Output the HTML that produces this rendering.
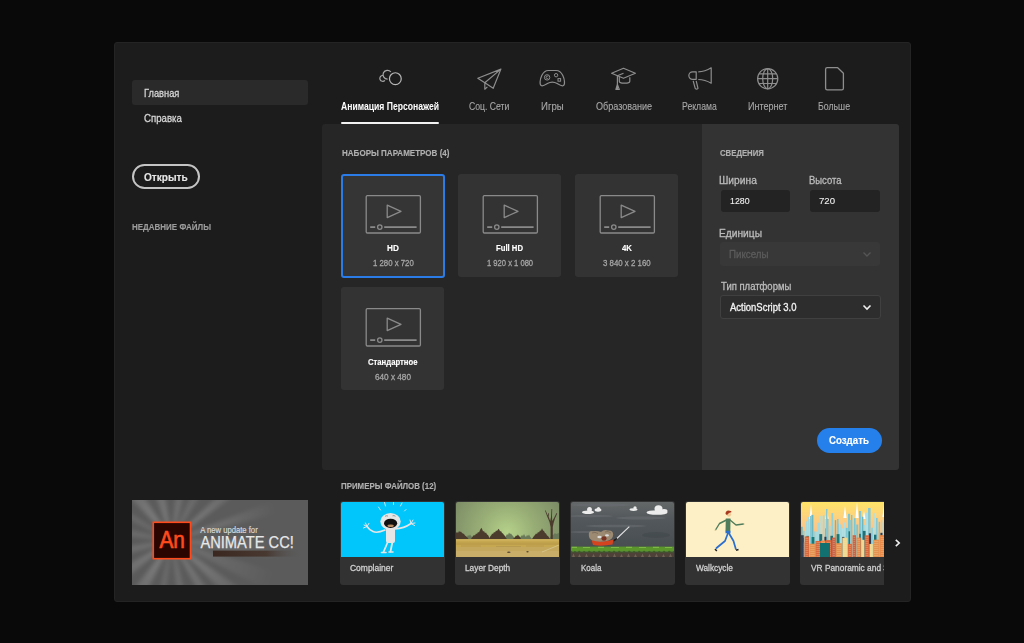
<!DOCTYPE html>
<html><head><meta charset="utf-8">
<style>
*{margin:0;padding:0;box-sizing:border-box}
html,body{width:1024px;height:643px;overflow:hidden;background:#090909;font-family:"Liberation Sans",sans-serif}
.a{position:absolute}
.t{position:absolute;white-space:nowrap;transform-origin:0 0;font-family:"Liberation Sans",sans-serif}
#panel{left:114px;top:42px;width:797px;height:560px;background:#1c1c1c;border:1px solid #242424;border-radius:3px}
</style></head><body>
<div id="panel" class="a"></div>
<!-- sidebar -->
<div class="a" style="left:132px;top:80px;width:176px;height:25px;background:#2a2a2a;border-radius:3px"></div>
<div class="a" style="left:132px;top:164px;width:68px;height:25px;border:2px solid #c4c4c4;border-radius:13px"></div>
<!-- banner -->
<div class="a" id="banner" style="left:132px;top:500px;width:176px;height:85px;background:#5a5a5a;overflow:hidden">
<svg class="a" style="left:0;top:0" width="176" height="85" viewBox="0 0 176 85">
<defs>
<radialGradient id="fade" cx="39.7" cy="40.6" r="110" gradientUnits="userSpaceOnUse"><stop offset="0" stop-color="#fff" stop-opacity="1"/><stop offset="0.5" stop-color="#fff" stop-opacity="0.5"/><stop offset="1" stop-color="#fff" stop-opacity="0"/></radialGradient>
<mask id="m1"><rect width="176" height="85" fill="url(#fade)"/></mask>
<filter id="bb" x="-20%" y="-20%" width="140%" height="140%"><feGaussianBlur stdDeviation="2"/></filter>
<linearGradient id="bar" x1="0" x2="1"><stop offset="0" stop-color="#3a2820"/><stop offset="0.6" stop-color="#433128" stop-opacity="0.85"/><stop offset="1" stop-color="#5a5a5a" stop-opacity="0"/></linearGradient></defs>
<rect width="176" height="85" fill="#5b5b5b"/>
<g mask="url(#m1)"><g filter="url(#bb)"><path d="M39.7 40.6 L-139.3 -48.6 L-127.1 -69.8 Z" fill="#ffffff" opacity="0.16"/><path d="M39.7 40.6 L-99.2 -103.3 L-66.3 -129.0 Z" fill="#ffffff" opacity="0.26"/><path d="M39.7 40.6 L-27.1 -147.9 L10.1 -157.2 Z" fill="#ffffff" opacity="0.23"/><path d="M39.7 40.6 L57.1 -158.6 L91.5 -152.6 Z" fill="#ffffff" opacity="0.19"/><path d="M39.7 40.6 L119.4 -142.8 L147.2 -128.1 Z" fill="#ffffff" opacity="0.16"/><path d="M39.7 40.6 L183.6 -98.3 L201.5 -77.0 Z" fill="#ffffff" opacity="0.26"/><path d="M39.7 40.6 L225.8 -32.7 L233.3 -9.5 Z" fill="#ffffff" opacity="0.23"/><path d="M39.7 40.6 L239.6 33.6 L236.7 75.3 Z" fill="#ffffff" opacity="0.19"/><path d="M39.7 40.6 L231.5 97.4 L217.1 132.9 Z" fill="#ffffff" opacity="0.16"/><path d="M39.7 40.6 L203.5 155.3 L181.1 182.0 Z" fill="#ffffff" opacity="0.26"/><path d="M39.7 40.6 L158.7 201.4 L132.0 218.0 Z" fill="#ffffff" opacity="0.23"/><path d="M39.7 40.6 L88.1 234.7 L60.6 239.5 Z" fill="#ffffff" opacity="0.19"/><path d="M39.7 40.6 L17.1 239.3 L-7.0 235.1 Z" fill="#ffffff" opacity="0.16"/><path d="M39.7 40.6 L-48.0 220.4 L-83.4 198.2 Z" fill="#ffffff" opacity="0.26"/><path d="M39.7 40.6 L-114.6 167.8 L-136.1 136.0 Z" fill="#ffffff" opacity="0.23"/><path d="M39.7 40.6 L-151.6 99.1 L-158.8 65.0 Z" fill="#ffffff" opacity="0.19"/><path d="M39.7 40.6 L-159.4 21.4 L-153.9 -9.5 Z" fill="#ffffff" opacity="0.16"/></g></g>
<rect x="81" y="50.6" width="89" height="6" fill="url(#bar)"/>
<rect x="21.3" y="22.3" width="37.2" height="36.4" fill="#2a0500" stroke="#ff4a1c" stroke-width="1.6"/>
<text x="27.4" y="48" font-family="Liberation Sans" font-size="24.5" fill="#ff4a1c" stroke="#ff4a1c" stroke-width="0.7" textLength="25.4" lengthAdjust="spacingAndGlyphs">An</text>
<text x="68.2" y="32.6" font-family="Liberation Sans" font-size="9" fill="#d8d8d8" stroke="#d8d8d8" stroke-width="0.2" textLength="57.5" lengthAdjust="spacingAndGlyphs">A new update for</text>
<text x="68.4" y="47.8" font-family="Liberation Sans" font-size="16.2" fill="#e8e8e8" stroke="#e8e8e8" stroke-width="0.25" textLength="93.5" lengthAdjust="spacingAndGlyphs">ANIMATE CC!</text>
</svg>
</div>
<!-- tabs icons -->
<svg class="a" style="left:374px;top:64px" width="32" height="26" viewBox="0 0 32 26" fill="none" stroke-width="1.2">
<circle cx="21.35" cy="14.65" r="5.9" stroke="#b8b8b8"/>
<path d="M16.9 8.0 A4.4 4.4 0 1 0 13.6 15.1" stroke="#a8a8a8"/>
<path d="M9.0 11.5 A2.9 2.9 0 1 0 10.9 16.3" stroke="#a8a8a8"/>
</svg>
<svg class="a" style="left:472px;top:64px" width="36" height="30" viewBox="0 0 36 30" fill="none" stroke="#8e8e8e" stroke-width="1.2" stroke-linejoin="round">
<path d="M28.9 5.1 L5.8 14.2 L12.8 18.7 L21.2 24.3 Z M28.9 5.1 L12.8 18.7 L12.8 25.2 L15.4 22.9"/>
</svg>
<svg class="a" style="left:536px;top:64px" width="34" height="28" viewBox="0 0 34 28" fill="none" stroke="#8e8e8e" stroke-width="1.2">
<path d="M5.2 21.6 C3.4 20.6 3.9 15.2 5.9 11.2 C7.5 8.0 9.2 6.6 12.4 6.5 H20.2 C23.4 6.6 25.1 8.0 26.7 11.2 C28.7 15.2 29.2 20.6 27.4 21.6 C25.9 22.6 23.8 21.2 21.2 19.6 C18.2 17.8 14.4 17.8 11.4 19.6 C8.8 21.2 6.7 22.6 5.2 21.6 Z"/>
<g stroke-width="1"><circle cx="11.1" cy="13.4" r="2.7"/><path d="M12.2 12.6 A1.2 1.2 0 1 0 12.2 14.2"/>
<circle cx="20.1" cy="11.2" r="1.7"/><rect x="22" y="14.6" width="2.6" height="2.6"/></g>
</svg>
<svg class="a" style="left:606px;top:62px" width="36" height="30" viewBox="0 0 36 30" fill="none" stroke="#8e8e8e" stroke-width="1.2" stroke-linejoin="round">
<path d="M5.6 11.3 L17.5 6.3 L29.4 11.3 L17.5 16.3 Z"/>
<path d="M17.5 11.3 L11.4 13.8 L11.4 22.4"/>
<path d="M11.4 22.4 L9.9 27.4 L13.3 27.4 Z M11.4 23 L11.4 27.4"/>
<path d="M13.3 14.4 V19.2 Q13.3 21.2 18.5 21.2 Q23.8 21.2 23.8 19.2 V15.2"/>
</svg>
<svg class="a" style="left:682px;top:62px" width="36" height="30" viewBox="0 0 36 30" fill="none" stroke="#8e8e8e" stroke-width="1.2" stroke-linejoin="round">
<path d="M14.2 9.8 H10.6 A3.75 3.75 0 0 0 10.6 17.3 H14.2 Z"/>
<path d="M16.3 9.8 Q23 9.8 29.2 5.8 V21.2 Q23 17.5 16.3 17.5"/>
<path d="M11.2 18.9 L13.2 26.4 Q14.6 27.8 16.0 26.4 L14.2 18.9"/>
</svg>
<svg class="a" style="left:752px;top:62px" width="32" height="32" viewBox="0 0 32 32" fill="none" stroke="#8e8e8e" stroke-width="1.2">
<circle cx="15.7" cy="16.7" r="10.1"/>
<ellipse cx="15.7" cy="16.7" rx="5" ry="10.1"/>
<path d="M15.7 6.6 V26.8 M5.6 16.7 H25.8 M7.0 11.9 H24.4 M7.0 21.5 H24.4"/>
</svg>
<svg class="a" style="left:820px;top:62px" width="30" height="32" viewBox="0 0 30 32" fill="none" stroke="#8e8e8e" stroke-width="1.3" stroke-linejoin="round">
<path d="M7.2 5.7 H17.7 L23.4 11.2 V26.3 Q23.4 27.9 21.8 27.9 H7.2 Q5.6 27.9 5.6 26.3 V7.3 Q5.6 5.7 7.2 5.7 Z"/>
</svg>
<div class="a" style="left:341px;top:122px;width:98px;height:2px;background:#f2f2f2;border-radius:1px"></div>
<!-- presets panel -->
<div class="a" style="left:322px;top:124px;width:380px;height:346px;background:#262626;border-radius:3px 0 0 3px"></div>
<div class="a" style="left:702px;top:124px;width:197px;height:346px;background:#333333;border-radius:0 3px 3px 0"></div>
<div class="a" style="left:341px;top:174px;width:104px;height:104px;background:#353535;border:2px solid #2b7ce6;border-radius:3px"></div>
<svg class="a" style="left:341px;top:174px" width="104" height="70" viewBox="0 0 104 70" fill="none" stroke="#8a8a8a" stroke-width="1.3">
<rect x="25.2" y="21.6" width="54.2" height="37.4" rx="1.2"/>
<path d="M46.2 31.2 L60.0 37.3 L46.2 43.6 Z" stroke-linejoin="round"/>
<path d="M29.2 53.1 H34.2 M43.2 53.1 H75.6" stroke-width="1.6"/>
<circle cx="38.8" cy="53.1" r="2.2"/>
</svg>
<div class="a" style="left:458px;top:174px;width:103px;height:103px;background:#333333;border-radius:3px"></div>
<svg class="a" style="left:458px;top:174px" width="104" height="70" viewBox="0 0 104 70" fill="none" stroke="#8a8a8a" stroke-width="1.3">
<rect x="25.2" y="21.6" width="54.2" height="37.4" rx="1.2"/>
<path d="M46.2 31.2 L60.0 37.3 L46.2 43.6 Z" stroke-linejoin="round"/>
<path d="M29.2 53.1 H34.2 M43.2 53.1 H75.6" stroke-width="1.6"/>
<circle cx="38.8" cy="53.1" r="2.2"/>
</svg>
<div class="a" style="left:575px;top:174px;width:103px;height:103px;background:#333333;border-radius:3px"></div>
<svg class="a" style="left:575px;top:174px" width="104" height="70" viewBox="0 0 104 70" fill="none" stroke="#8a8a8a" stroke-width="1.3">
<rect x="25.2" y="21.6" width="54.2" height="37.4" rx="1.2"/>
<path d="M46.2 31.2 L60.0 37.3 L46.2 43.6 Z" stroke-linejoin="round"/>
<path d="M29.2 53.1 H34.2 M43.2 53.1 H75.6" stroke-width="1.6"/>
<circle cx="38.8" cy="53.1" r="2.2"/>
</svg>
<div class="a" style="left:341px;top:287px;width:103px;height:103px;background:#333333;border-radius:3px"></div>
<svg class="a" style="left:341px;top:287px" width="104" height="70" viewBox="0 0 104 70" fill="none" stroke="#8a8a8a" stroke-width="1.3">
<rect x="25.2" y="21.6" width="54.2" height="37.4" rx="1.2"/>
<path d="M46.2 31.2 L60.0 37.3 L46.2 43.6 Z" stroke-linejoin="round"/>
<path d="M29.2 53.1 H34.2 M43.2 53.1 H75.6" stroke-width="1.6"/>
<circle cx="38.8" cy="53.1" r="2.2"/>
</svg>
<!-- right panel controls -->
<div class="a" style="left:721px;top:190px;width:69px;height:22px;background:#232323;border-radius:3px"></div>
<div class="a" style="left:810px;top:190px;width:70px;height:22px;background:#232323;border-radius:3px"></div>
<div class="a" style="left:720px;top:242px;width:160px;height:24px;background:#383838;border-radius:3px"></div>
<div class="a" style="left:720px;top:295px;width:161px;height:24px;background:#2d2d2d;border:1px solid #404040;border-radius:3px"></div>
<svg class="a" style="left:860px;top:248px" width="14" height="12" viewBox="0 0 14 12"><path d="M3.5 4.5 L7 8 L10.5 4.5" fill="none" stroke="#555" stroke-width="1.4"/></svg>
<svg class="a" style="left:860px;top:301px" width="14" height="12" viewBox="0 0 14 12"><path d="M3.5 4.5 L7 8 L10.5 4.5" fill="none" stroke="#f0f0f0" stroke-width="1.6"/></svg>
<div class="a" style="left:817px;top:428px;width:65px;height:25px;background:#2680eb;border-radius:13px"></div>
<!-- samples -->
<div class="a" style="left:340px;top:501px;width:105px;height:84px;background:#323232;border-radius:3px;overflow:hidden"><div class="a" style="left:1px;top:1px;width:103px;height:55px;overflow:hidden;border-radius:2px 2px 0 0"><svg width="103" height="55" viewBox="0 0 103 55">
<rect width="103" height="55" fill="#00c6fb"/><g transform="translate(-1,-1.5)">
<g stroke="#e6e6e6" fill="none" stroke-linecap="round">
<path d="M38.5 6.5 L40.5 9.5 M44.5 2 L45.5 5.5 M53.5 1.5 L53.5 4 M62 2.5 L60.5 5.5 M66 9 L64.5 10.5" stroke-width="0.9"/>
<path d="M45 29.5 Q37 33 33 31 Q29 29 27 26" stroke-width="1.6"/>
<path d="M55 28.5 Q64 28 71 23" stroke-width="1.6"/>
<path d="M27 26 L24 24.5 M27 26 L25.5 22.5 M27 26 L29 22.8 M27 26 L23.5 27.5" stroke-width="1"/>
<path d="M71 23 L70 19.5 M71 23 L73 19.5 M71 23 L75 22.5 M71 23 L74.5 25" stroke-width="1"/>
<path d="M48 41 L43.5 51.5 M52.5 41 L50.5 51" stroke-width="1.8"/>
<path d="M41.5 52 H46 M49 51.5 H53" stroke-width="1.6"/>
</g>
<rect x="46" y="27" width="9" height="15.5" rx="2" fill="#e6e6e6"/>
<ellipse cx="50.5" cy="21" rx="10.2" ry="8.6" fill="#e6e6e6"/>
<ellipse cx="50.6" cy="22.8" rx="6.6" ry="4.6" fill="#111"/>
<ellipse cx="50.6" cy="25.3" rx="3.2" ry="1.3" fill="#b88a60"/>
<path d="M45 15.8 Q46.5 14.8 48 15.6 M52.5 15.4 Q54 14.6 55.5 15.8" stroke="#777" stroke-width="0.7" fill="none"/>
</g></svg></div></div>
<div class="a" style="left:455px;top:501px;width:105px;height:84px;background:#323232;border-radius:3px;overflow:hidden"><div class="a" style="left:1px;top:1px;width:103px;height:55px;overflow:hidden;border-radius:2px 2px 0 0"><svg width="103" height="55" viewBox="0 0 103 55">
<defs><radialGradient id="lg" cx="51" cy="31" r="60" gradientUnits="userSpaceOnUse"><stop offset="0" stop-color="#b6d28a"/><stop offset="0.45" stop-color="#98ae76"/><stop offset="1" stop-color="#7c8c66"/></radialGradient></defs>
<rect width="103" height="55" fill="url(#lg)"/>
<g fill="#687858">
<path d="M9 37 L11 35 L12 33 L13 34 L14 32.5 L15 34 L16 35 L18 37 Z"/>
<path d="M48 37 L50 34 L51 32 L52 33 L53 30.5 L54 32 L55 31.5 L56 33 L57 34 L59 37 Z"/>
<path d="M63 37 L65 34.5 L66 33 L67 34 L68 32 L69 34 L70 35 L71 33 L72 34 L73 32.5 L74 34.5 L76 37 Z"/>
<path d="M93 37 L95 34 L97 33 L99 31 L100 32 L103 31 L103 37 Z"/>
</g>
<g fill="#4a3b2d">
<path d="M0 31 L1 30 L2 31 L3 29 L4 30 L5 29.5 L6 31 L8 32 L9 33.5 L11 35 L12.5 37 L0 37 Z"/>
<path d="M15 37 L17 34 L18 33 L19 33.5 L20 31.5 L21 32 L22 30 L23 30.5 L24 28 L25.4 25.8 L26.5 28 L27 29.5 L28 29 L29 31 L30 30.5 L31 32.5 L32 33 L33 35 L34 37 Z"/>
<path d="M33 37 L34.5 34 L35.5 33 L36 31.5 L37 32 L38 30 L39 30.5 L40 28.5 L41 29 L42.5 26.8 L43.5 28 L44 29.5 L45 29 L46 31 L47 31.5 L48 33 L49 34 L50 36 L51 37 Z"/>
<path d="M57 37 L59 35 L60 33.5 L61 34 L61.8 32.5 L63 34 L64 35 L65 37 Z"/>
<path d="M76 37 L78 34 L79 33 L80 31.5 L81 32 L82 30 L83 30.5 L84 28.5 L85 28.8 L86 26.3 L87 28.5 L88 29 L89 31 L90 31.5 L91 33.5 L92 34 L94 37 Z"/>
<path d="M94.6 37 V25 L93.5 20 L91 14 L89 8.5 L89.6 8.3 L91.8 13.5 L92.4 11 L93 11.2 L92.6 14.5 L94.2 19 L95 15 L95.5 7 L96.2 7 L96 14 L96.2 19 L98 16 L100.5 11 L101.2 11.4 L99 16.5 L97.6 21 L96.8 25 V37 Z"/>
</g>
<rect y="37.3" width="103" height="17.7" fill="#c6a850"/>
<rect y="37.3" width="103" height="1.6" fill="#cfb05a"/>
<rect y="40.5" width="103" height="2.5" fill="#bd9e4a"/>
<rect y="45" width="103" height="4" fill="#c3a85e"/>
<rect y="49" width="103" height="6" fill="#c8ae68"/>
<g fill="#b49650" opacity="0.7"><rect x="5" y="43.5" width="20" height="1"/><rect x="40" y="44" width="25" height="1"/><rect x="70" y="43.5" width="18" height="1"/></g>
<path d="M86 50 L103 43" stroke="#e2d6a8" stroke-width="0.9" opacity="0.6"/>
<ellipse cx="52.8" cy="50.3" rx="1.8" ry="0.8" fill="#5a4a3a"/>
<ellipse cx="71.5" cy="49.8" rx="1.2" ry="0.8" fill="#5a4a3a"/>
</svg></div></div>
<div class="a" style="left:570px;top:501px;width:105px;height:84px;background:#323232;border-radius:3px;overflow:hidden"><div class="a" style="left:1px;top:1px;width:103px;height:55px;overflow:hidden;border-radius:2px 2px 0 0"><svg width="103" height="55" viewBox="0 0 103 55">
<defs><linearGradient id="kg" x1="0" y1="0" x2="0" y2="1"><stop offset="0" stop-color="#646868"/><stop offset="0.3" stop-color="#53585c"/><stop offset="1" stop-color="#434a4e"/></linearGradient>
<filter id="kb"><feGaussianBlur stdDeviation="0.6"/></filter></defs>
<rect width="103" height="55" fill="url(#kg)"/>
<g fill="#6c7074" opacity="0.55" filter="url(#kb)">
<ellipse cx="30" cy="3" rx="30" ry="1.5"/><ellipse cx="20" cy="14" rx="22" ry="1.2"/><ellipse cx="70" cy="16" rx="25" ry="1.5"/><ellipse cx="45" cy="24" rx="30" ry="1.3"/><ellipse cx="15" cy="30" rx="16" ry="1"/>
</g>
<ellipse cx="85" cy="33" rx="14" ry="3" fill="#41474b" opacity="0.5" filter="url(#kb)"/>
<g transform="translate(-1,-2)">
<g fill="#ececec" filter="url(#kb)">
<ellipse cx="18" cy="12.2" rx="6" ry="1.8"/><ellipse cx="19.5" cy="9.5" rx="2.4" ry="2.6"/><ellipse cx="28" cy="10" rx="3.4" ry="1.7"/><ellipse cx="28.5" cy="8.6" rx="1.6" ry="1.5"/>
<ellipse cx="63.5" cy="9.6" rx="4" ry="1.4"/><ellipse cx="65" cy="7.8" rx="1.6" ry="1.6"/>
<ellipse cx="87" cy="12.5" rx="10.5" ry="2.3"/><ellipse cx="88.5" cy="8.8" rx="4" ry="3.6"/><ellipse cx="94" cy="11" rx="3.5" ry="2"/>
</g>
<path d="M45.8 39.5 L59.3 26.6" stroke="#e2e2e2" stroke-width="1.1"/>
<path d="M43.5 40.8 L47 38.5" stroke="#1e1a18" stroke-width="1.6"/>
<path d="M21.5 40 Q32 43 43.5 39.5 L42.5 44.5 Q32 46.5 23 45 Z" fill="#d4441f"/>
<path d="M18.8 35 Q18.5 30.5 23 31.2 Q27 30.5 31 32 Q34 29 38 30.5 Q43 30 43.2 34.5 Q43 39.5 37 41 Q28 42.5 22.5 40.5 Q18.8 39 18.8 35 Z" fill="#9c8a72"/>
<path d="M22 33 Q25 31.5 28 33.5 M35 32 Q38 30.5 41 33" stroke="#7a6a58" stroke-width="0.8" fill="none"/>
<ellipse cx="29.5" cy="37" rx="2.2" ry="1.2" fill="#dcdcdc"/><ellipse cx="37" cy="35.4" rx="2" ry="1.1" fill="#dcdcdc"/>
<ellipse cx="34" cy="38.5" rx="2.6" ry="2.2" fill="#7a3424"/>
</g>
<rect y="44.6" width="103" height="5" fill="#5a962c"/>
<g fill="#7cb843"><rect x="1" y="44.8" width="5" height="1.2"/><rect x="12" y="45" width="7" height="1"/><rect x="27" y="44.8" width="6" height="1.2"/><rect x="40" y="45" width="8" height="1"/><rect x="55" y="44.8" width="6" height="1.2"/><rect x="68" y="45" width="7" height="1"/><rect x="82" y="44.8" width="6" height="1.2"/><rect x="94" y="45" width="7" height="1"/></g>
<path d="M0 48.5 L2 50.5 L4 48.8 L6 51 L8 48.6 L11 50.8 L13 48.7 L16 51 L18 48.5 L21 50.6 L23 48.8 L26 51 L28 48.6 L31 50.7 L33 48.5 L36 51 L38 48.7 L41 50.6 L43 48.6 L46 51 L48 48.5 L51 50.8 L53 48.7 L56 51 L58 48.6 L61 50.6 L63 48.8 L66 51 L68 48.5 L71 50.7 L73 48.6 L76 51 L78 48.7 L81 50.6 L83 48.5 L86 51 L88 48.7 L91 50.8 L93 48.6 L96 51 L98 48.5 L101 50.6 L103 48.7 V55 H0 Z" fill="#3a5e22"/>
<rect y="50.5" width="103" height="4.5" fill="#4e4238"/>
<path d="M1 55 L2.5 51.5 L4 55 M7 55 L8.5 52 L10 55 M14 55 L15.5 51.5 L17 55 M21 55 L22.5 52 L24 55 M28 55 L29.5 51.5 L31 55 M35 55 L36.5 52 L38 55 M42 55 L43.5 51.5 L45 55 M49 55 L50.5 52 L52 55 M56 55 L57.5 51.5 L59 55 M63 55 L64.5 52 L66 55 M70 55 L71.5 51.5 L73 55 M77 55 L78.5 52 L80 55 M84 55 L85.5 51.5 L87 55 M91 55 L92.5 52 L94 55 M98 55 L99.5 51.5 L101 55" fill="#6e6254"/>
</svg></div></div>
<div class="a" style="left:685px;top:501px;width:105px;height:84px;background:#323232;border-radius:3px;overflow:hidden"><div class="a" style="left:1px;top:1px;width:103px;height:55px;overflow:hidden;border-radius:2px 2px 0 0"><svg width="103" height="55" viewBox="0 0 103 55">
<rect width="103" height="55" fill="#fdf0c6"/><g transform="translate(-1,-0.5)">
<g fill="none" stroke-linecap="round" stroke-linejoin="round">
<path d="M41.5 18.5 L34.5 22 L30.5 28.5" stroke="#4f7d5c" stroke-width="1.4"/>
<path d="M43.2 31 L40 39.5 L31.5 46.5" stroke="#2a6ed0" stroke-width="1.7"/>
<path d="M43.5 31 L48.5 39.5 L50.8 47.5" stroke="#2a6ed0" stroke-width="1.7"/>
<path d="M45 18.5 L51 23.5 L58.5 22.5" stroke="#4f7d5c" stroke-width="1.4"/>
</g>
<path d="M40.8 17 L45.5 17 L45.3 29.8 L40.5 29.8 Z" fill="#4f7d5c"/>
<rect x="40.5" y="29.3" width="5" height="2.5" fill="#2a6ed0"/>
<circle cx="43.8" cy="12.8" r="2.4" fill="#f2cc98"/>
<path d="M40.5 12.5 Q40.5 9 43.5 9 Q46.5 9 46.8 10.5 L44 11.5 L42 13.5 Z" fill="#a8381e"/>
<path d="M30 47.5 L31.8 49.5" stroke="#222" stroke-width="1.5"/>
<path d="M51 48.8 L53.5 48" stroke="#222" stroke-width="1.5"/>
<circle cx="30.4" cy="28.8" r="0.7" fill="#f2cc98"/><circle cx="59" cy="22.4" r="0.7" fill="#f2cc98"/>
</g></svg></div></div>
<div class="a" style="left:800px;top:501px;width:84px;height:84px;overflow:hidden"><div class="a" style="left:0;top:0;width:105px;height:84px;background:#323232;border-radius:3px;overflow:hidden"><div class="a" style="left:1px;top:1px;width:103px;height:55px;overflow:hidden;border-radius:2px 2px 0 0"><svg width="103" height="55" viewBox="0 0 103 55">
<defs><linearGradient id="vg" x1="0" y1="0" x2="0" y2="1"><stop offset="0" stop-color="#ffe468"/><stop offset="0.4" stop-color="#fcca88"/><stop offset="1" stop-color="#f0b48a"/></linearGradient></defs>
<rect width="103" height="55" fill="url(#vg)"/>
<path d="M8.4 17 L10 2 L11.6 17 Z" fill="#ffffff"/>
<path d="M24.4 17 L26 7 L27.6 17 Z" fill="#ffffff"/>
<path d="M42.4 16 L44 4 L45.6 16 Z" fill="#ffffff"/>
<path d="M54.4 16 L56 0 L57.6 16 Z" fill="#ffffff"/>
<path d="M61.4 17 L63 9 L64.6 17 Z" fill="#ffffff"/>
<path d="M81.4 15 L83 3 L84.6 15 Z" fill="#ffffff"/>
<path d="M97.4 16 L99 4 L100.6 16 Z" fill="#ffffff"/>
<rect x="0.0" y="24.8" width="1.7" height="30.2" fill="#6ab8c4"/>
<rect x="2.0" y="28.9" width="1.6" height="26.1" fill="#93d0d8"/>
<rect x="5.0" y="19.4" width="1.1" height="35.6" fill="#a6dade"/>
<rect x="6.9" y="15.0" width="1.1" height="40.0" fill="#a6dade"/>
<rect x="8.8" y="27.3" width="1.2" height="27.7" fill="#b2e0e2"/>
<rect x="10.4" y="12.8" width="2.0" height="42.2" fill="#6ab8c4"/>
<rect x="13.2" y="29.4" width="1.2" height="25.6" fill="#93d0d8"/>
<rect x="14.8" y="29.6" width="1.3" height="25.4" fill="#a6dade"/>
<rect x="16.7" y="20.8" width="2.2" height="34.2" fill="#a6dade"/>
<rect x="19.3" y="13.9" width="2.2" height="41.1" fill="#b2e0e2"/>
<rect x="22.1" y="13.3" width="1.4" height="41.7" fill="#a6dade"/>
<rect x="24.1" y="26.3" width="1.4" height="28.7" fill="#6ab8c4"/>
<rect x="25.7" y="16.8" width="1.8" height="38.2" fill="#7ec6d0"/>
<rect x="28.2" y="23.9" width="1.4" height="31.1" fill="#a6dade"/>
<rect x="30.5" y="11.1" width="1.8" height="43.9" fill="#93d0d8"/>
<rect x="33.8" y="18.1" width="1.4" height="36.9" fill="#6ab8c4"/>
<rect x="36.6" y="21.6" width="1.4" height="33.4" fill="#93d0d8"/>
<rect x="38.8" y="22.5" width="1.8" height="32.5" fill="#a6dade"/>
<rect x="41.0" y="26.4" width="1.3" height="28.6" fill="#b2e0e2"/>
<rect x="43.0" y="20.5" width="1.4" height="34.5" fill="#b2e0e2"/>
<rect x="44.8" y="25.9" width="1.9" height="29.1" fill="#7ec6d0"/>
<rect x="47.0" y="11.8" width="2.1" height="43.2" fill="#7ec6d0"/>
<rect x="50.0" y="13.0" width="1.4" height="42.0" fill="#7ec6d0"/>
<rect x="52.9" y="16.2" width="1.7" height="38.8" fill="#7ec6d0"/>
<rect x="55.2" y="22.5" width="2.0" height="32.5" fill="#7ec6d0"/>
<rect x="58.8" y="11.0" width="1.2" height="44.0" fill="#6ab8c4"/>
<rect x="60.9" y="14.7" width="1.5" height="40.3" fill="#6ab8c4"/>
<rect x="63.1" y="23.0" width="1.3" height="32.0" fill="#a6dade"/>
<rect x="64.7" y="10.7" width="2.1" height="44.3" fill="#b2e0e2"/>
<rect x="67.4" y="29.6" width="1.2" height="25.4" fill="#6ab8c4"/>
<rect x="70.2" y="25.8" width="1.8" height="29.2" fill="#93d0d8"/>
<rect x="72.4" y="11.2" width="1.4" height="43.8" fill="#b2e0e2"/>
<rect x="74.5" y="30.0" width="1.5" height="25.0" fill="#a6dade"/>
<rect x="77.6" y="19.8" width="1.5" height="35.2" fill="#7ec6d0"/>
<rect x="80.0" y="18.1" width="1.3" height="36.9" fill="#a6dade"/>
<rect x="81.7" y="20.6" width="2.0" height="34.4" fill="#a6dade"/>
<rect x="84.8" y="16.8" width="1.6" height="38.2" fill="#93d0d8"/>
<rect x="87.2" y="21.0" width="1.6" height="34.0" fill="#6ab8c4"/>
<rect x="89.6" y="25.5" width="1.9" height="29.5" fill="#6ab8c4"/>
<rect x="92.6" y="17.3" width="1.9" height="37.7" fill="#7ec6d0"/>
<rect x="95.9" y="29.6" width="1.3" height="25.4" fill="#7ec6d0"/>
<rect x="98.8" y="13.6" width="1.4" height="41.4" fill="#93d0d8"/>
<rect x="101.0" y="16.5" width="1.9" height="38.5" fill="#7ec6d0"/>
<rect x="58" y="9" width="2.2" height="46" fill="#88c8d2"/>
<rect x="67" y="6" width="2.6" height="49" fill="#88c8d2"/>
<rect x="25" y="7" width="1.6" height="48" fill="#88c8d2"/>
<rect x="9" y="14" width="1.8" height="41" fill="#88c8d2"/>
<rect x="88" y="20" width="2" height="35" fill="#88c8d2"/>
<rect x="48" y="18" width="1.8" height="37" fill="#88c8d2"/>
<rect x="75" y="16" width="1.6" height="39" fill="#88c8d2"/>
<rect x="36" y="17" width="1.6" height="38" fill="#88c8d2"/>
<rect x="0.0" y="33.2" width="2.7" height="21.8" fill="#2a3c52"/>
<rect x="5.4" y="33.9" width="2.5" height="21.1" fill="#177a7a"/>
<rect x="10.6" y="35.0" width="2.8" height="20.0" fill="#177a7a"/>
<rect x="18.3" y="32.1" width="2.9" height="22.9" fill="#1e6f76"/>
<rect x="23.4" y="34.8" width="2.0" height="20.2" fill="#2a3c52"/>
<rect x="29.4" y="33.8" width="2.6" height="21.2" fill="#1e6f76"/>
<rect x="35.6" y="32.1" width="2.9" height="22.9" fill="#177a7a"/>
<rect x="41.1" y="34.9" width="2.3" height="20.1" fill="#2a3c52"/>
<rect x="47.5" y="29.3" width="1.5" height="25.7" fill="#177a7a"/>
<rect x="52.7" y="34.1" width="1.8" height="20.9" fill="#1e6f76"/>
<rect x="58.2" y="31.8" width="1.6" height="23.2" fill="#1e6f76"/>
<rect x="61.8" y="28.9" width="2.8" height="26.1" fill="#1e6f76"/>
<rect x="67.8" y="31.3" width="2.3" height="23.7" fill="#2a3c52"/>
<rect x="73.0" y="32.7" width="2.4" height="22.3" fill="#1e6f76"/>
<rect x="79.4" y="30.8" width="2.1" height="24.2" fill="#2a3c52"/>
<rect x="86.0" y="33.5" width="2.8" height="21.5" fill="#2a3c52"/>
<rect x="93.7" y="30.4" width="2.3" height="24.6" fill="#2a3c52"/>
<rect x="99.4" y="32.6" width="2.0" height="22.4" fill="#2a3c52"/>
<rect x="-1.0" y="40.3" width="4.3" height="14.7" fill="#c8644a"/>
<rect x="-0.2" y="42" width="2.7" height="0.8" fill="#f8e4a8" opacity="0.3"/>
<rect x="-0.2" y="44" width="2.7" height="0.8" fill="#f8e4a8" opacity="0.3"/>
<rect x="-0.2" y="46" width="2.7" height="0.8" fill="#f8e4a8" opacity="0.3"/>
<rect x="-0.2" y="48" width="2.7" height="0.8" fill="#f8e4a8" opacity="0.3"/>
<rect x="-0.2" y="50" width="2.7" height="0.8" fill="#f8e4a8" opacity="0.3"/>
<rect x="-0.2" y="52" width="2.7" height="0.8" fill="#f8e4a8" opacity="0.3"/>
<rect x="-0.2" y="54" width="2.7" height="0.8" fill="#f8e4a8" opacity="0.3"/>
<rect x="3.7" y="34.4" width="4.4" height="20.6" fill="#d9683e"/>
<rect x="4.5" y="36" width="2.8" height="0.8" fill="#f8e4a8" opacity="0.3"/>
<rect x="4.5" y="38" width="2.8" height="0.8" fill="#f8e4a8" opacity="0.3"/>
<rect x="4.5" y="40" width="2.8" height="0.8" fill="#f8e4a8" opacity="0.3"/>
<rect x="4.5" y="42" width="2.8" height="0.8" fill="#f8e4a8" opacity="0.3"/>
<rect x="4.5" y="44" width="2.8" height="0.8" fill="#f8e4a8" opacity="0.3"/>
<rect x="4.5" y="46" width="2.8" height="0.8" fill="#f8e4a8" opacity="0.3"/>
<rect x="4.5" y="48" width="2.8" height="0.8" fill="#f8e4a8" opacity="0.3"/>
<rect x="4.5" y="50" width="2.8" height="0.8" fill="#f8e4a8" opacity="0.3"/>
<rect x="4.5" y="52" width="2.8" height="0.8" fill="#f8e4a8" opacity="0.3"/>
<rect x="4.5" y="54" width="2.8" height="0.8" fill="#f8e4a8" opacity="0.3"/>
<rect x="8.5" y="41.7" width="5.9" height="13.3" fill="#e49252"/>
<rect x="9.3" y="43" width="4.3" height="0.8" fill="#f8e4a8" opacity="0.3"/>
<rect x="9.3" y="45" width="4.3" height="0.8" fill="#f8e4a8" opacity="0.3"/>
<rect x="9.3" y="47" width="4.3" height="0.8" fill="#f8e4a8" opacity="0.3"/>
<rect x="9.3" y="49" width="4.3" height="0.8" fill="#f8e4a8" opacity="0.3"/>
<rect x="9.3" y="51" width="4.3" height="0.8" fill="#f8e4a8" opacity="0.3"/>
<rect x="9.3" y="53" width="4.3" height="0.8" fill="#f8e4a8" opacity="0.3"/>
<rect x="14.5" y="39.0" width="5.5" height="16.0" fill="#d9683e"/>
<rect x="15.3" y="40" width="3.9" height="0.8" fill="#f8e4a8" opacity="0.3"/>
<rect x="15.3" y="42" width="3.9" height="0.8" fill="#f8e4a8" opacity="0.3"/>
<rect x="15.3" y="44" width="3.9" height="0.8" fill="#f8e4a8" opacity="0.3"/>
<rect x="15.3" y="46" width="3.9" height="0.8" fill="#f8e4a8" opacity="0.3"/>
<rect x="15.3" y="48" width="3.9" height="0.8" fill="#f8e4a8" opacity="0.3"/>
<rect x="15.3" y="50" width="3.9" height="0.8" fill="#f8e4a8" opacity="0.3"/>
<rect x="15.3" y="52" width="3.9" height="0.8" fill="#f8e4a8" opacity="0.3"/>
<rect x="15.3" y="54" width="3.9" height="0.8" fill="#f8e4a8" opacity="0.3"/>
<rect x="20.0" y="38.5" width="4.7" height="16.5" fill="#e9894a"/>
<rect x="20.8" y="40" width="3.1" height="0.8" fill="#f8e4a8" opacity="0.3"/>
<rect x="20.8" y="42" width="3.1" height="0.8" fill="#f8e4a8" opacity="0.3"/>
<rect x="20.8" y="44" width="3.1" height="0.8" fill="#f8e4a8" opacity="0.3"/>
<rect x="20.8" y="46" width="3.1" height="0.8" fill="#f8e4a8" opacity="0.3"/>
<rect x="20.8" y="48" width="3.1" height="0.8" fill="#f8e4a8" opacity="0.3"/>
<rect x="20.8" y="50" width="3.1" height="0.8" fill="#f8e4a8" opacity="0.3"/>
<rect x="20.8" y="52" width="3.1" height="0.8" fill="#f8e4a8" opacity="0.3"/>
<rect x="20.8" y="54" width="3.1" height="0.8" fill="#f8e4a8" opacity="0.3"/>
<rect x="25.0" y="38.1" width="5.6" height="16.9" fill="#d9683e"/>
<rect x="25.8" y="40" width="4.0" height="0.8" fill="#f8e4a8" opacity="0.3"/>
<rect x="25.8" y="42" width="4.0" height="0.8" fill="#f8e4a8" opacity="0.3"/>
<rect x="25.8" y="44" width="4.0" height="0.8" fill="#f8e4a8" opacity="0.3"/>
<rect x="25.8" y="46" width="4.0" height="0.8" fill="#f8e4a8" opacity="0.3"/>
<rect x="25.8" y="48" width="4.0" height="0.8" fill="#f8e4a8" opacity="0.3"/>
<rect x="25.8" y="50" width="4.0" height="0.8" fill="#f8e4a8" opacity="0.3"/>
<rect x="25.8" y="52" width="4.0" height="0.8" fill="#f8e4a8" opacity="0.3"/>
<rect x="25.8" y="54" width="4.0" height="0.8" fill="#f8e4a8" opacity="0.3"/>
<rect x="31.0" y="35.6" width="3.7" height="19.4" fill="#c8644a"/>
<rect x="31.8" y="37" width="2.1" height="0.8" fill="#f8e4a8" opacity="0.3"/>
<rect x="31.8" y="39" width="2.1" height="0.8" fill="#f8e4a8" opacity="0.3"/>
<rect x="31.8" y="41" width="2.1" height="0.8" fill="#f8e4a8" opacity="0.3"/>
<rect x="31.8" y="43" width="2.1" height="0.8" fill="#f8e4a8" opacity="0.3"/>
<rect x="31.8" y="45" width="2.1" height="0.8" fill="#f8e4a8" opacity="0.3"/>
<rect x="31.8" y="47" width="2.1" height="0.8" fill="#f8e4a8" opacity="0.3"/>
<rect x="31.8" y="49" width="2.1" height="0.8" fill="#f8e4a8" opacity="0.3"/>
<rect x="31.8" y="51" width="2.1" height="0.8" fill="#f8e4a8" opacity="0.3"/>
<rect x="31.8" y="53" width="2.1" height="0.8" fill="#f8e4a8" opacity="0.3"/>
<rect x="35.0" y="41.2" width="5.9" height="13.8" fill="#e49252"/>
<rect x="35.8" y="43" width="4.3" height="0.8" fill="#f8e4a8" opacity="0.3"/>
<rect x="35.8" y="45" width="4.3" height="0.8" fill="#f8e4a8" opacity="0.3"/>
<rect x="35.8" y="47" width="4.3" height="0.8" fill="#f8e4a8" opacity="0.3"/>
<rect x="35.8" y="49" width="4.3" height="0.8" fill="#f8e4a8" opacity="0.3"/>
<rect x="35.8" y="51" width="4.3" height="0.8" fill="#f8e4a8" opacity="0.3"/>
<rect x="35.8" y="53" width="4.3" height="0.8" fill="#f8e4a8" opacity="0.3"/>
<rect x="41.3" y="35.7" width="5.2" height="19.3" fill="#efd892"/>
<rect x="42.1" y="37" width="3.6" height="0.8" fill="#f8e4a8" opacity="0.3"/>
<rect x="42.1" y="39" width="3.6" height="0.8" fill="#f8e4a8" opacity="0.3"/>
<rect x="42.1" y="41" width="3.6" height="0.8" fill="#f8e4a8" opacity="0.3"/>
<rect x="42.1" y="43" width="3.6" height="0.8" fill="#f8e4a8" opacity="0.3"/>
<rect x="42.1" y="45" width="3.6" height="0.8" fill="#f8e4a8" opacity="0.3"/>
<rect x="42.1" y="47" width="3.6" height="0.8" fill="#f8e4a8" opacity="0.3"/>
<rect x="42.1" y="49" width="3.6" height="0.8" fill="#f8e4a8" opacity="0.3"/>
<rect x="42.1" y="51" width="3.6" height="0.8" fill="#f8e4a8" opacity="0.3"/>
<rect x="42.1" y="53" width="3.6" height="0.8" fill="#f8e4a8" opacity="0.3"/>
<rect x="46.9" y="41.9" width="4.0" height="13.1" fill="#d9683e"/>
<rect x="47.7" y="43" width="2.4" height="0.8" fill="#f8e4a8" opacity="0.3"/>
<rect x="47.7" y="45" width="2.4" height="0.8" fill="#f8e4a8" opacity="0.3"/>
<rect x="47.7" y="47" width="2.4" height="0.8" fill="#f8e4a8" opacity="0.3"/>
<rect x="47.7" y="49" width="2.4" height="0.8" fill="#f8e4a8" opacity="0.3"/>
<rect x="47.7" y="51" width="2.4" height="0.8" fill="#f8e4a8" opacity="0.3"/>
<rect x="47.7" y="53" width="2.4" height="0.8" fill="#f8e4a8" opacity="0.3"/>
<rect x="51.6" y="33.2" width="3.4" height="21.8" fill="#c8644a"/>
<rect x="52.4" y="35" width="1.8" height="0.8" fill="#f8e4a8" opacity="0.3"/>
<rect x="52.4" y="37" width="1.8" height="0.8" fill="#f8e4a8" opacity="0.3"/>
<rect x="52.4" y="39" width="1.8" height="0.8" fill="#f8e4a8" opacity="0.3"/>
<rect x="52.4" y="41" width="1.8" height="0.8" fill="#f8e4a8" opacity="0.3"/>
<rect x="52.4" y="43" width="1.8" height="0.8" fill="#f8e4a8" opacity="0.3"/>
<rect x="52.4" y="45" width="1.8" height="0.8" fill="#f8e4a8" opacity="0.3"/>
<rect x="52.4" y="47" width="1.8" height="0.8" fill="#f8e4a8" opacity="0.3"/>
<rect x="52.4" y="49" width="1.8" height="0.8" fill="#f8e4a8" opacity="0.3"/>
<rect x="52.4" y="51" width="1.8" height="0.8" fill="#f8e4a8" opacity="0.3"/>
<rect x="52.4" y="53" width="1.8" height="0.8" fill="#f8e4a8" opacity="0.3"/>
<rect x="55.5" y="35.6" width="4.3" height="19.4" fill="#e9894a"/>
<rect x="56.3" y="37" width="2.7" height="0.8" fill="#f8e4a8" opacity="0.3"/>
<rect x="56.3" y="39" width="2.7" height="0.8" fill="#f8e4a8" opacity="0.3"/>
<rect x="56.3" y="41" width="2.7" height="0.8" fill="#f8e4a8" opacity="0.3"/>
<rect x="56.3" y="43" width="2.7" height="0.8" fill="#f8e4a8" opacity="0.3"/>
<rect x="56.3" y="45" width="2.7" height="0.8" fill="#f8e4a8" opacity="0.3"/>
<rect x="56.3" y="47" width="2.7" height="0.8" fill="#f8e4a8" opacity="0.3"/>
<rect x="56.3" y="49" width="2.7" height="0.8" fill="#f8e4a8" opacity="0.3"/>
<rect x="56.3" y="51" width="2.7" height="0.8" fill="#f8e4a8" opacity="0.3"/>
<rect x="56.3" y="53" width="2.7" height="0.8" fill="#f8e4a8" opacity="0.3"/>
<rect x="60.5" y="37.8" width="3.0" height="17.2" fill="#efd892"/>
<rect x="61.3" y="39" width="1.4" height="0.8" fill="#f8e4a8" opacity="0.3"/>
<rect x="61.3" y="41" width="1.4" height="0.8" fill="#f8e4a8" opacity="0.3"/>
<rect x="61.3" y="43" width="1.4" height="0.8" fill="#f8e4a8" opacity="0.3"/>
<rect x="61.3" y="45" width="1.4" height="0.8" fill="#f8e4a8" opacity="0.3"/>
<rect x="61.3" y="47" width="1.4" height="0.8" fill="#f8e4a8" opacity="0.3"/>
<rect x="61.3" y="49" width="1.4" height="0.8" fill="#f8e4a8" opacity="0.3"/>
<rect x="61.3" y="51" width="1.4" height="0.8" fill="#f8e4a8" opacity="0.3"/>
<rect x="61.3" y="53" width="1.4" height="0.8" fill="#f8e4a8" opacity="0.3"/>
<rect x="63.7" y="33.3" width="4.4" height="21.7" fill="#d9683e"/>
<rect x="64.5" y="35" width="2.8" height="0.8" fill="#f8e4a8" opacity="0.3"/>
<rect x="64.5" y="37" width="2.8" height="0.8" fill="#f8e4a8" opacity="0.3"/>
<rect x="64.5" y="39" width="2.8" height="0.8" fill="#f8e4a8" opacity="0.3"/>
<rect x="64.5" y="41" width="2.8" height="0.8" fill="#f8e4a8" opacity="0.3"/>
<rect x="64.5" y="43" width="2.8" height="0.8" fill="#f8e4a8" opacity="0.3"/>
<rect x="64.5" y="45" width="2.8" height="0.8" fill="#f8e4a8" opacity="0.3"/>
<rect x="64.5" y="47" width="2.8" height="0.8" fill="#f8e4a8" opacity="0.3"/>
<rect x="64.5" y="49" width="2.8" height="0.8" fill="#f8e4a8" opacity="0.3"/>
<rect x="64.5" y="51" width="2.8" height="0.8" fill="#f8e4a8" opacity="0.3"/>
<rect x="64.5" y="53" width="2.8" height="0.8" fill="#f8e4a8" opacity="0.3"/>
<rect x="68.4" y="41.9" width="3.5" height="13.1" fill="#efd892"/>
<rect x="69.2" y="43" width="1.9" height="0.8" fill="#f8e4a8" opacity="0.3"/>
<rect x="69.2" y="45" width="1.9" height="0.8" fill="#f8e4a8" opacity="0.3"/>
<rect x="69.2" y="47" width="1.9" height="0.8" fill="#f8e4a8" opacity="0.3"/>
<rect x="69.2" y="49" width="1.9" height="0.8" fill="#f8e4a8" opacity="0.3"/>
<rect x="69.2" y="51" width="1.9" height="0.8" fill="#f8e4a8" opacity="0.3"/>
<rect x="69.2" y="53" width="1.9" height="0.8" fill="#f8e4a8" opacity="0.3"/>
<rect x="72.2" y="37.7" width="6.0" height="17.3" fill="#e49252"/>
<rect x="73.0" y="39" width="4.4" height="0.8" fill="#f8e4a8" opacity="0.3"/>
<rect x="73.0" y="41" width="4.4" height="0.8" fill="#f8e4a8" opacity="0.3"/>
<rect x="73.0" y="43" width="4.4" height="0.8" fill="#f8e4a8" opacity="0.3"/>
<rect x="73.0" y="45" width="4.4" height="0.8" fill="#f8e4a8" opacity="0.3"/>
<rect x="73.0" y="47" width="4.4" height="0.8" fill="#f8e4a8" opacity="0.3"/>
<rect x="73.0" y="49" width="4.4" height="0.8" fill="#f8e4a8" opacity="0.3"/>
<rect x="73.0" y="51" width="4.4" height="0.8" fill="#f8e4a8" opacity="0.3"/>
<rect x="73.0" y="53" width="4.4" height="0.8" fill="#f8e4a8" opacity="0.3"/>
<rect x="78.9" y="33.1" width="5.7" height="21.9" fill="#e9894a"/>
<rect x="79.7" y="35" width="4.1" height="0.8" fill="#f8e4a8" opacity="0.3"/>
<rect x="79.7" y="37" width="4.1" height="0.8" fill="#f8e4a8" opacity="0.3"/>
<rect x="79.7" y="39" width="4.1" height="0.8" fill="#f8e4a8" opacity="0.3"/>
<rect x="79.7" y="41" width="4.1" height="0.8" fill="#f8e4a8" opacity="0.3"/>
<rect x="79.7" y="43" width="4.1" height="0.8" fill="#f8e4a8" opacity="0.3"/>
<rect x="79.7" y="45" width="4.1" height="0.8" fill="#f8e4a8" opacity="0.3"/>
<rect x="79.7" y="47" width="4.1" height="0.8" fill="#f8e4a8" opacity="0.3"/>
<rect x="79.7" y="49" width="4.1" height="0.8" fill="#f8e4a8" opacity="0.3"/>
<rect x="79.7" y="51" width="4.1" height="0.8" fill="#f8e4a8" opacity="0.3"/>
<rect x="79.7" y="53" width="4.1" height="0.8" fill="#f8e4a8" opacity="0.3"/>
<rect x="84.8" y="36.0" width="4.6" height="19.0" fill="#efd892"/>
<rect x="85.6" y="38" width="3.0" height="0.8" fill="#f8e4a8" opacity="0.3"/>
<rect x="85.6" y="40" width="3.0" height="0.8" fill="#f8e4a8" opacity="0.3"/>
<rect x="85.6" y="42" width="3.0" height="0.8" fill="#f8e4a8" opacity="0.3"/>
<rect x="85.6" y="44" width="3.0" height="0.8" fill="#f8e4a8" opacity="0.3"/>
<rect x="85.6" y="46" width="3.0" height="0.8" fill="#f8e4a8" opacity="0.3"/>
<rect x="85.6" y="48" width="3.0" height="0.8" fill="#f8e4a8" opacity="0.3"/>
<rect x="85.6" y="50" width="3.0" height="0.8" fill="#f8e4a8" opacity="0.3"/>
<rect x="85.6" y="52" width="3.0" height="0.8" fill="#f8e4a8" opacity="0.3"/>
<rect x="85.6" y="54" width="3.0" height="0.8" fill="#f8e4a8" opacity="0.3"/>
<rect x="90.0" y="36.1" width="3.1" height="18.9" fill="#c8644a"/>
<rect x="90.8" y="38" width="1.5" height="0.8" fill="#f8e4a8" opacity="0.3"/>
<rect x="90.8" y="40" width="1.5" height="0.8" fill="#f8e4a8" opacity="0.3"/>
<rect x="90.8" y="42" width="1.5" height="0.8" fill="#f8e4a8" opacity="0.3"/>
<rect x="90.8" y="44" width="1.5" height="0.8" fill="#f8e4a8" opacity="0.3"/>
<rect x="90.8" y="46" width="1.5" height="0.8" fill="#f8e4a8" opacity="0.3"/>
<rect x="90.8" y="48" width="1.5" height="0.8" fill="#f8e4a8" opacity="0.3"/>
<rect x="90.8" y="50" width="1.5" height="0.8" fill="#f8e4a8" opacity="0.3"/>
<rect x="90.8" y="52" width="1.5" height="0.8" fill="#f8e4a8" opacity="0.3"/>
<rect x="90.8" y="54" width="1.5" height="0.8" fill="#f8e4a8" opacity="0.3"/>
<rect x="93.7" y="33.3" width="4.8" height="21.7" fill="#efd892"/>
<rect x="94.5" y="35" width="3.2" height="0.8" fill="#f8e4a8" opacity="0.3"/>
<rect x="94.5" y="37" width="3.2" height="0.8" fill="#f8e4a8" opacity="0.3"/>
<rect x="94.5" y="39" width="3.2" height="0.8" fill="#f8e4a8" opacity="0.3"/>
<rect x="94.5" y="41" width="3.2" height="0.8" fill="#f8e4a8" opacity="0.3"/>
<rect x="94.5" y="43" width="3.2" height="0.8" fill="#f8e4a8" opacity="0.3"/>
<rect x="94.5" y="45" width="3.2" height="0.8" fill="#f8e4a8" opacity="0.3"/>
<rect x="94.5" y="47" width="3.2" height="0.8" fill="#f8e4a8" opacity="0.3"/>
<rect x="94.5" y="49" width="3.2" height="0.8" fill="#f8e4a8" opacity="0.3"/>
<rect x="94.5" y="51" width="3.2" height="0.8" fill="#f8e4a8" opacity="0.3"/>
<rect x="94.5" y="53" width="3.2" height="0.8" fill="#f8e4a8" opacity="0.3"/>
<rect x="98.9" y="34.0" width="5.1" height="21.0" fill="#c8644a"/>
<rect x="99.7" y="35" width="3.5" height="0.8" fill="#f8e4a8" opacity="0.3"/>
<rect x="99.7" y="37" width="3.5" height="0.8" fill="#f8e4a8" opacity="0.3"/>
<rect x="99.7" y="39" width="3.5" height="0.8" fill="#f8e4a8" opacity="0.3"/>
<rect x="99.7" y="41" width="3.5" height="0.8" fill="#f8e4a8" opacity="0.3"/>
<rect x="99.7" y="43" width="3.5" height="0.8" fill="#f8e4a8" opacity="0.3"/>
<rect x="99.7" y="45" width="3.5" height="0.8" fill="#f8e4a8" opacity="0.3"/>
<rect x="99.7" y="47" width="3.5" height="0.8" fill="#f8e4a8" opacity="0.3"/>
<rect x="99.7" y="49" width="3.5" height="0.8" fill="#f8e4a8" opacity="0.3"/>
<rect x="99.7" y="51" width="3.5" height="0.8" fill="#f8e4a8" opacity="0.3"/>
<rect x="99.7" y="53" width="3.5" height="0.8" fill="#f8e4a8" opacity="0.3"/>
<rect x="19" y="41" width="10" height="14" fill="#137070"/>
<rect x="0" y="36" width="2.5" height="19" fill="#2e3e54"/>
</svg></div></div></div>
<svg class="a" style="left:890px;top:536px" width="12" height="13" viewBox="0 0 12 13"><path d="M5.8 3.8 L9.2 7.0 L5.8 10.2" fill="none" stroke="#f0f0f0" stroke-width="1.6"/></svg>
<div class="t" style="left:143.66px;top:88px;font-size:11px;line-height:11px;font-weight:400;color:#d6d6d6;transform:scaleX(0.844);-webkit-text-stroke:0.3px #d6d6d6">Главная</div>
<div class="t" style="left:144.00px;top:113px;font-size:11px;line-height:11px;font-weight:400;color:#d6d6d6;transform:scaleX(0.877);-webkit-text-stroke:0.3px #d6d6d6">Справка</div>
<div class="t" style="left:144.20px;top:172px;font-size:11px;line-height:11px;font-weight:700;color:#e6e6e6;transform:scaleX(0.917);-webkit-text-stroke:0.15px #e6e6e6">Открыть</div>
<div class="t" style="left:132.00px;top:223px;font-size:9px;line-height:9px;font-weight:700;color:#9c9c9c;transform:scaleX(0.888);-webkit-text-stroke:0.15px #9c9c9c">НЕДАВНИЕ ФАЙЛЫ</div>
<div class="t" style="left:340.80px;top:102px;font-size:10px;line-height:10px;font-weight:700;color:#ffffff;transform:scaleX(0.861)">Анимация Персонажей</div>
<div class="t" style="left:469.40px;top:102px;font-size:10px;line-height:10px;font-weight:400;color:#a8a8a8;transform:scaleX(0.863);-webkit-text-stroke:0.1px #a8a8a8">Соц. Сети</div>
<div class="t" style="left:541.30px;top:102px;font-size:10px;line-height:10px;font-weight:400;color:#a8a8a8;transform:scaleX(0.961);-webkit-text-stroke:0.1px #a8a8a8">Игры</div>
<div class="t" style="left:595.70px;top:102px;font-size:10px;line-height:10px;font-weight:400;color:#a8a8a8;transform:scaleX(0.905);-webkit-text-stroke:0.1px #a8a8a8">Образование</div>
<div class="t" style="left:682.40px;top:102px;font-size:10px;line-height:10px;font-weight:400;color:#a8a8a8;transform:scaleX(0.865);-webkit-text-stroke:0.1px #a8a8a8">Реклама</div>
<div class="t" style="left:748.20px;top:102px;font-size:10px;line-height:10px;font-weight:400;color:#a8a8a8;transform:scaleX(0.900);-webkit-text-stroke:0.1px #a8a8a8">Интернет</div>
<div class="t" style="left:818.30px;top:102px;font-size:10px;line-height:10px;font-weight:400;color:#a8a8a8;transform:scaleX(0.876);-webkit-text-stroke:0.1px #a8a8a8">Больше</div>
<div class="t" style="left:341.70px;top:149px;font-size:9px;line-height:9px;font-weight:700;color:#b0b0b0;transform:scaleX(0.893);-webkit-text-stroke:0.15px #b0b0b0">НАБОРЫ ПАРАМЕТРОВ (4)</div>
<div class="t" style="left:387.40px;top:244px;font-size:9px;line-height:9px;font-weight:700;color:#ffffff;transform:scaleX(0.908);-webkit-text-stroke:0.15px #ffffff">HD</div>
<div class="t" style="left:372.50px;top:259px;font-size:9px;line-height:9px;font-weight:400;color:#a6a6a6;transform:scaleX(0.866);-webkit-text-stroke:0.3px #a6a6a6">1 280 x 720</div>
<div class="t" style="left:496.40px;top:244px;font-size:9px;line-height:9px;font-weight:700;color:#ffffff;transform:scaleX(0.856);-webkit-text-stroke:0.15px #ffffff">Full HD</div>
<div class="t" style="left:486.50px;top:259px;font-size:9px;line-height:9px;font-weight:400;color:#a6a6a6;transform:scaleX(0.845);-webkit-text-stroke:0.3px #a6a6a6">1 920 x 1 080</div>
<div class="t" style="left:621.80px;top:244px;font-size:9px;line-height:9px;font-weight:700;color:#ffffff;transform:scaleX(0.867);-webkit-text-stroke:0.15px #ffffff">4K</div>
<div class="t" style="left:602.80px;top:259px;font-size:9px;line-height:9px;font-weight:400;color:#a6a6a6;transform:scaleX(0.873);-webkit-text-stroke:0.3px #a6a6a6">3 840 x 2 160</div>
<div class="t" style="left:368.40px;top:358px;font-size:9px;line-height:9px;font-weight:700;color:#ffffff;transform:scaleX(0.855);-webkit-text-stroke:0.15px #ffffff">Стандартное</div>
<div class="t" style="left:374.90px;top:373px;font-size:9px;line-height:9px;font-weight:400;color:#a6a6a6;transform:scaleX(0.910);-webkit-text-stroke:0.3px #a6a6a6">640 x 480</div>
<div class="t" style="left:720.10px;top:149px;font-size:9px;line-height:9px;font-weight:700;color:#b0b0b0;transform:scaleX(0.863);-webkit-text-stroke:0.15px #b0b0b0">СВЕДЕНИЯ</div>
<div class="t" style="left:719.03px;top:175px;font-size:10.5px;line-height:10.5px;font-weight:400;color:#bcbcbc;transform:scaleX(0.974);-webkit-text-stroke:0.3px #bcbcbc">Ширина</div>
<div class="t" style="left:808.90px;top:175px;font-size:10.5px;line-height:10.5px;font-weight:400;color:#bcbcbc;transform:scaleX(0.900);-webkit-text-stroke:0.3px #bcbcbc">Высота</div>
<div class="t" style="left:729.80px;top:196px;font-size:9.5px;line-height:9.5px;font-weight:400;color:#f0f0f0;transform:scaleX(0.924);-webkit-text-stroke:0.1px #f0f0f0">1280</div>
<div class="t" style="left:818.90px;top:196px;font-size:9.5px;line-height:9.5px;font-weight:400;color:#f0f0f0;transform:scaleX(1.012);-webkit-text-stroke:0.1px #f0f0f0">720</div>
<div class="t" style="left:719.03px;top:228px;font-size:10.5px;line-height:10.5px;font-weight:400;color:#bcbcbc;transform:scaleX(0.972);-webkit-text-stroke:0.3px #bcbcbc">Единицы</div>
<div class="t" style="left:729.40px;top:249px;font-size:10.5px;line-height:10.5px;font-weight:400;color:#5c5c5c;transform:scaleX(0.929);-webkit-text-stroke:0.3px #5c5c5c">Пикселы</div>
<div class="t" style="left:720.50px;top:281px;font-size:10.5px;line-height:10.5px;font-weight:400;color:#bcbcbc;transform:scaleX(0.904);-webkit-text-stroke:0.3px #bcbcbc">Тип платформы</div>
<div class="t" style="left:730.10px;top:302px;font-size:10.5px;line-height:10.5px;font-weight:400;color:#f4f4f4;transform:scaleX(0.903);-webkit-text-stroke:0.3px #f4f4f4">ActionScript 3.0</div>
<div class="t" style="left:829.40px;top:435px;font-size:10.5px;line-height:10.5px;font-weight:700;color:#ffffff;transform:scaleX(0.923);-webkit-text-stroke:0.15px #ffffff">Создать</div>
<div class="t" style="left:341.20px;top:482px;font-size:9px;line-height:9px;font-weight:700;color:#b0b0b0;transform:scaleX(0.877);-webkit-text-stroke:0.15px #b0b0b0">ПРИМЕРЫ ФАЙЛОВ (12)</div>
<div class="t" style="left:349.50px;top:564px;font-size:9px;line-height:9px;font-weight:400;color:#d0d0d0;transform:scaleX(0.941);-webkit-text-stroke:0.3px #d0d0d0">Complainer</div>
<div class="t" style="left:465.10px;top:564px;font-size:9px;line-height:9px;font-weight:400;color:#d0d0d0;transform:scaleX(0.922);-webkit-text-stroke:0.3px #d0d0d0">Layer Depth</div>
<div class="t" style="left:580.60px;top:564px;font-size:9px;line-height:9px;font-weight:400;color:#d0d0d0;transform:scaleX(0.887);-webkit-text-stroke:0.3px #d0d0d0">Koala</div>
<div class="t" style="left:695.90px;top:564px;font-size:9px;line-height:9px;font-weight:400;color:#d0d0d0;transform:scaleX(0.920);-webkit-text-stroke:0.3px #d0d0d0">Walkcycle</div>
<div class="a" style="left:800px;top:540px;width:84px;height:40px;overflow:hidden"><div class="t" style="left:10.80px;top:24px;font-size:9px;line-height:9px;font-weight:400;color:#d0d0d0;transform:scaleX(0.927);-webkit-text-stroke:0.3px #d0d0d0">VR Panoramic and 3D</div></div>
</body></html>
